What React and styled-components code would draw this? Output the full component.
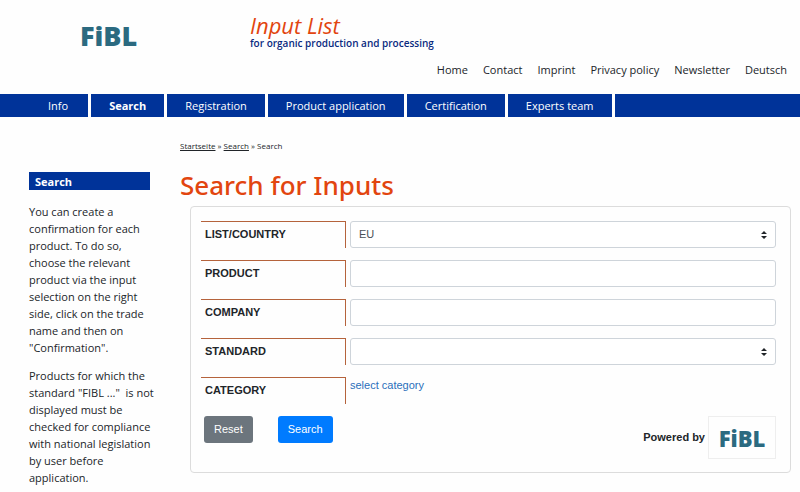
import * as React from 'react';
import styled, { createGlobalStyle } from 'styled-components';

const topLinks = ['Home', 'Contact', 'Imprint', 'Privacy policy', 'Newsletter', 'Deutsch'];

const sections = [
  { label: 'Info' },
  { label: 'Search', active: true },
  { label: 'Registration' },
  { label: 'Product application' },
  { label: 'Certification' },
  { label: 'Experts team' },
];

const fields = [
  { id: 'country', label: 'LIST/COUNTRY', type: 'select', options: ['EU'] },
  { id: 'product', label: 'PRODUCT', type: 'text' },
  { id: 'company', label: 'COMPANY', type: 'text' },
  { id: 'standard', label: 'STANDARD', type: 'select', options: [''] },
];

function SelectField({ id, options }) {
  return (
    <SelectWrapper>
      <Select id={id}>
        {options.map((option) => (
          <option key={option}>{option}</option>
        ))}
      </Select>
      <Carets viewBox='0 0 6 8' aria-hidden='true'>
        <path d='M3 0 6 3H0zM3 8 0 5h6z' />
      </Carets>
    </SelectWrapper>
  );
}

export default function App() {
  return (
    <>
      <GlobalStyle />
      <Header>
        <Brand>
          <Logo href='#home'>FiBL</Logo>
        </Brand>
        <div>
          <SiteTitle>Input List</SiteTitle>
          <SiteSubtitle>for organic production and processing</SiteSubtitle>
        </div>
      </Header>
      <TopNav>
        {topLinks.map((link) => (
          <a key={link} href='#top'>
            {link}
          </a>
        ))}
      </TopNav>
      <MainNav>
        {sections.map(({ label, active }) => (
          <NavItem key={label} href='#section' $active={active}>
            {label}
          </NavItem>
        ))}
        <NavRest />
      </MainNav>
      <Content>
        <Sidebar>
          <SidebarTitle>Search</SidebarTitle>
          <p>
            You can create a confirmation for each product. To do so, choose the relevant product
            via the input selection on the right side, click on the trade name and then on
            "Confirmation".
          </p>
          <p>
            Products for which the standard "FIBL ..."&nbsp; is not displayed must be checked for
            compliance with national legislation by user before application.
          </p>
        </Sidebar>
        <Main>
          <Breadcrumb>
            <a href='#start'>Startseite</a> » <a href='#search'>Search</a> » Search
          </Breadcrumb>
          <PageTitle>Search for Inputs</PageTitle>
          <Card onSubmit={(e) => e.preventDefault()}>
            {fields.map(({ id, label, type, options }) => (
              <Row key={id}>
                <Label htmlFor={id}>{label}</Label>
                {type === 'select' ? (
                  <SelectField id={id} options={options} />
                ) : (
                  <Input id={id} type='text' />
                )}
              </Row>
            ))}
            <Row>
              <Label as='span'>CATEGORY</Label>
              <CategoryLink href='#category'>select category</CategoryLink>
            </Row>
            <Actions>
              <Button type='reset'>Reset</Button>
              <Button type='submit' $primary>
                Search
              </Button>
              <Powered>
                Powered by
                <LogoBox>
                  <Logo $small href='#fibl'>
                    FiBL
                  </Logo>
                </LogoBox>
              </Powered>
            </Actions>
          </Card>
        </Main>
      </Content>
    </>
  );
}

const GlobalStyle = createGlobalStyle`
  * {
    box-sizing: border-box;
  }

  body {
    margin: 0;
    background: #fefefe;
    color: #212529;
    font: 11px/17px 'Open Sans', 'Noto Sans', sans-serif;
  }

  a {
    color: inherit;
    text-decoration: none;
  }
`;

const Header = styled.header`
  display: grid;
  grid-template-columns: 170px 1fr;
  padding: 12px 0 11px 80px;
`;

const Brand = styled.div`
  padding-top: 10px;
`;

const Logo = styled.a`
  color: #2b6a80;
  font-family: 'Open Sans', sans-serif;
  font-weight: 800;
  font-size: ${({ $small }) => ($small ? '22px' : '27px')};
  line-height: 28px;
`;

const SiteTitle = styled.div`
  color: #e2450f;
  font-size: 22px;
  line-height: 26px;
  font-style: italic;
`;

const SiteSubtitle = styled.div`
  color: #0a2a80;
  font-size: 10px;
  line-height: 10px;
  font-weight: 600;
`;

const TopNav = styled.nav`
  display: flex;
  justify-content: flex-end;
  gap: 15px;
  padding: 0 13px 16px 0;
`;

const MainNav = styled.nav`
  display: flex;
  gap: 3px;
`;

const NavItem = styled.a`
  padding: 3px 18px;
  background: #003399;
  color: #fff;
  font-weight: ${({ $active }) => ($active ? 700 : 400)};

  &:first-child {
    padding: 3px 20px 3px 48px;
  }
`;

const NavRest = styled.div`
  flex: 1;
  background: #003399;
`;

const Content = styled.div`
  display: grid;
  grid-template-columns: 129px 1fr;
  gap: 22px;
  padding: 20px 9px 0 29px;
`;

const Sidebar = styled.aside`
  padding-top: 35px;

  p {
    margin: 0 0 11px;
  }
`;

const SidebarTitle = styled.h2`
  margin: 0 8px 13px 0;
  padding: 1px 6px 0;
  background: #003399;
  color: #fff;
  font-size: 11px;
  font-weight: 700;
`;

const Main = styled.main`
  min-width: 0;
`;

const Breadcrumb = styled.div`
  font-size: 8px;

  a {
    text-decoration: underline;
  }
`;

const PageTitle = styled.h1`
  margin: 14px 0 3px;
  color: #e2450f;
  font-family: 'Noto Sans', 'Open Sans', sans-serif;
  font-size: 26px;
  line-height: 35px;
  font-weight: 500;
`;

const Card = styled.form`
  display: flex;
  flex-direction: column;
  gap: 12px;
  margin-left: 10px;
  padding: 14px 14px 13px 10px;
  border: 1px solid #dcdcdc;
  border-radius: 4px;
  font-family: 'Liberation Sans', Arial, sans-serif;
`;

const Row = styled.div`
  display: grid;
  grid-template-columns: 145px 1fr;
  gap: 4px;
  height: 27px;
`;

const Label = styled.label`
  padding: 4px;
  border: 0 solid #b5633c;
  border-width: 1px 1px 0 0;
  font-weight: 700;
`;

const Input = styled.input`
  width: 100%;
  height: 27px;
  padding: 0 8px;
  border: 1px solid #ced4da;
  border-radius: 3px;
  background: #fff;
  color: #495057;
  font: inherit;
`;

const SelectWrapper = styled.div`
  position: relative;
`;

const Select = styled(Input).attrs({ as: 'select', type: undefined })`
  appearance: none;
`;

const Carets = styled.svg`
  position: absolute;
  top: 10px;
  right: 9px;
  width: 6px;
  height: 8px;
  fill: #212529;
  pointer-events: none;
`;

const CategoryLink = styled.a`
  color: #2a6ebb;
`;

const Actions = styled.div`
  display: flex;
  align-items: flex-start;
  gap: 25px;
  padding-left: 3px;
`;

const Button = styled.button`
  height: 27px;
  padding: 0 10px;
  border: 0;
  border-radius: 3px;
  background: ${({ $primary }) => ($primary ? '#007bff' : '#6c757d')};
  color: #fff;
  font: inherit;
`;

const Powered = styled.div`
  display: flex;
  align-items: center;
  gap: 3px;
  margin-left: auto;
  font-weight: 700;
`;

const LogoBox = styled.div`
  display: flex;
  align-items: center;
  justify-content: center;
  width: 68px;
  height: 43px;
  border: 1px solid #eee;
`;
